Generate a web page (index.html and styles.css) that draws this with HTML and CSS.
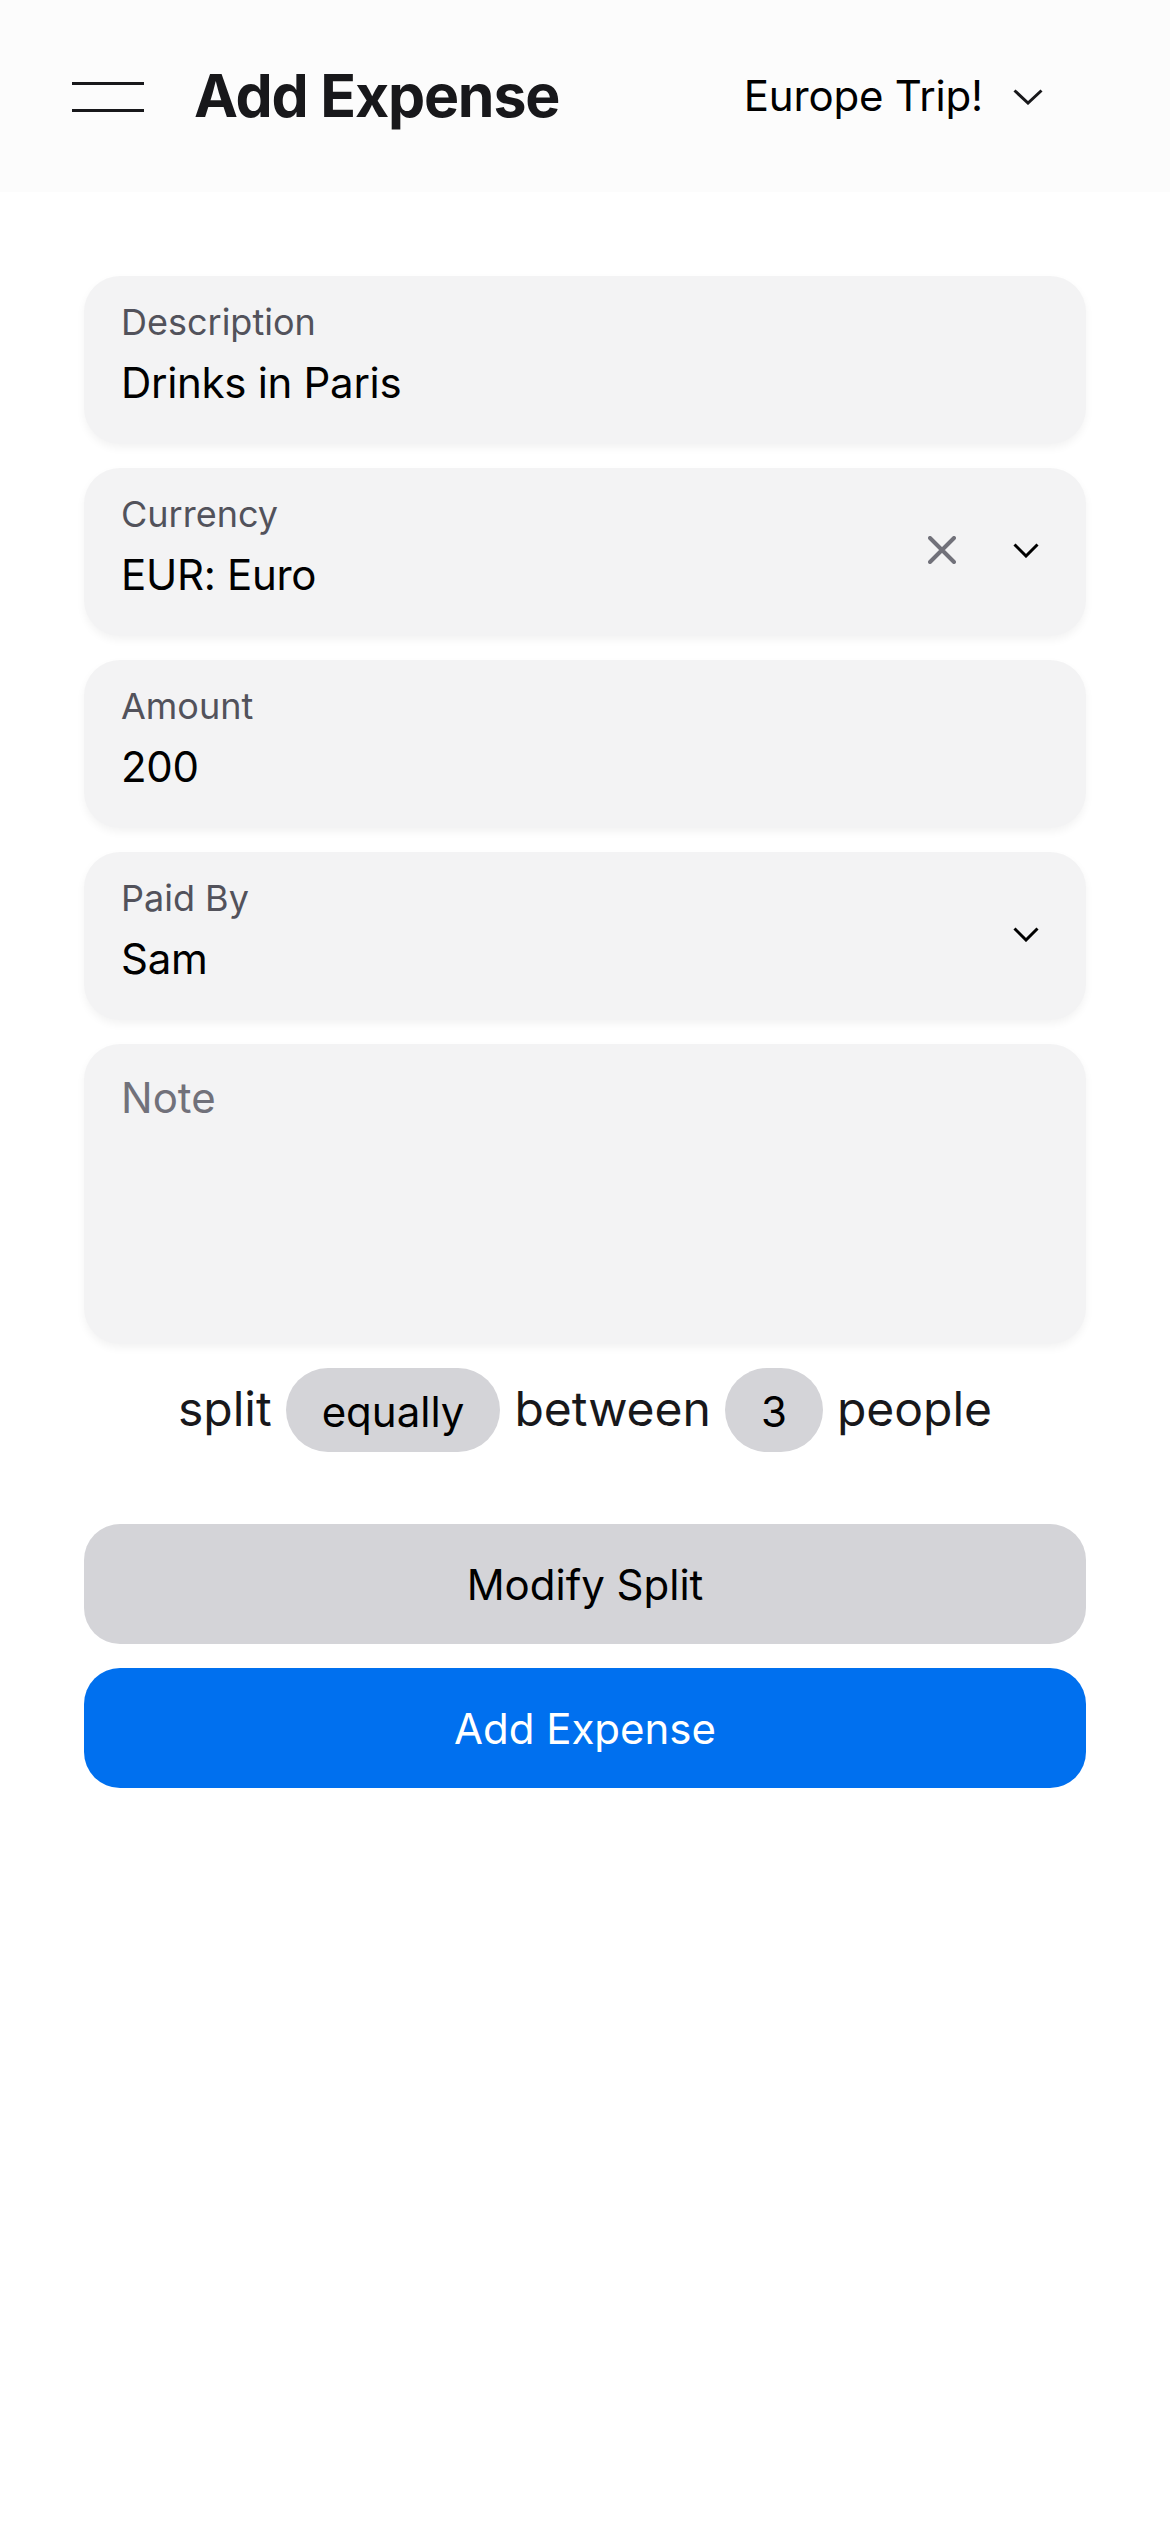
FILE: index.html
```html
<!DOCTYPE html>
<html lang="en">
<head>
<meta charset="utf-8">
<title>Add Expense</title>
<link rel="stylesheet" href="styles.css">
</head>
<body>
<header class="topbar">
  <svg class="menu-icon" width="72" height="30" viewBox="0 0 72 30" aria-hidden="true">
    <line x1="0" y1="1.5" x2="72" y2="1.5" stroke="#18181b" stroke-width="3"/>
    <line x1="0" y1="28.5" x2="72" y2="28.5" stroke="#18181b" stroke-width="3"/>
  </svg>
  <h1 class="title">Add Expense</h1>
  <div class="trip">
    <span class="trip-name">Europe Trip!</span>
    <svg class="chev chev-head" width="30" height="16" viewBox="0 0 30 16" aria-hidden="true">
      <path d="M1.5 1.5 L15 14 L28.5 1.5" fill="none" stroke="#18181b" stroke-width="3"/>
    </svg>
  </div>
</header>

<main class="form">
  <div class="field">
    <div class="field-body">
      <div class="label">Description</div>
      <div class="value">Drinks in Paris</div>
    </div>
  </div>

  <div class="field">
    <div class="field-body">
      <div class="label">Currency</div>
      <div class="value">EUR: Euro</div>
    </div>
    <div class="field-icons">
      <svg class="clear-icon" width="28" height="28" viewBox="0 0 28 28" aria-hidden="true">
        <path d="M2 2 L26 26 M26 2 L2 26" fill="none" stroke="#71717a" stroke-width="4" stroke-linecap="round"/>
      </svg>
      <svg class="chev" width="26" height="15" viewBox="0 0 26 15" aria-hidden="true">
        <path d="M1.5 1.5 L13 13 L24.5 1.5" fill="none" stroke="#000" stroke-width="3"/>
      </svg>
    </div>
  </div>

  <div class="field">
    <div class="field-body">
      <div class="label">Amount</div>
      <div class="value">200</div>
    </div>
  </div>

  <div class="field">
    <div class="field-body">
      <div class="label">Paid By</div>
      <div class="value">Sam</div>
    </div>
    <div class="field-icons">
      <svg class="chev" width="26" height="15" viewBox="0 0 26 15" aria-hidden="true">
        <path d="M1.5 1.5 L13 13 L24.5 1.5" fill="none" stroke="#000" stroke-width="3"/>
      </svg>
    </div>
  </div>

  <div class="field note">
    <div class="placeholder">Note</div>
  </div>

  <div class="split-row">
    <span class="split-word">split</span>
    <span class="pill">equally</span>
    <span class="split-word">between</span>
    <span class="pill">3</span>
    <span class="split-word">people</span>
  </div>

  <div class="buttons">
    <button class="btn btn-secondary">Modify Split</button>
    <button class="btn btn-primary">Add Expense</button>
  </div>
</main>
</body>
</html>
```

FILE: styles.css
```css
* {
  box-sizing: border-box;
}

html, body {
  margin: 0;
  padding: 0;
  background: #ffffff;
  font-family: "Inter", "Noto Sans", "Liberation Sans", sans-serif;
  color: #000;
}

.topbar {
  height: 192px;
  background: #fcfcfc;
  display: flex;
  align-items: center;
  padding: 0 127px 0 72px;
}

.menu-icon {
  display: block;
  flex: none;
  margin-top: 2px;
}

.title {
  margin: 0 0 0 50px;
  font-size: 59px;
  font-weight: 700;
  color: #18181b;
  line-height: 72px;
  letter-spacing: -1.2px;
}

.trip {
  margin-left: auto;
  display: flex;
  align-items: center;
  gap: 30px;
}

.trip-name {
  font-size: 42px;
  line-height: 52px;
  color: #000;
  letter-spacing: -0.2px;
}

.chev {
  display: block;
  flex: none;
}

.chev-head {
  margin-top: 2px;
}

.form {
  padding: 84px 84px 0;
  display: flex;
  flex-direction: column;
  gap: 24px;
}

.field {
  background: #f3f3f4;
  border-radius: 36px;
  height: 168px;
  display: flex;
  align-items: center;
  padding: 0 47px 0 37px;
  box-shadow: 0 4px 8px rgba(0, 0, 0, 0.05);
}

.field-body {
  flex: 1;
  padding: 24px 0 35px;
}

.label {
  font-size: 36px;
  line-height: 44px;
  color: #52525b;
}

.value {
  margin-top: 13px;
  font-size: 42px;
  line-height: 52px;
  color: #000;
  letter-spacing: -0.3px;
}

.field-icons {
  display: flex;
  align-items: center;
  gap: 57px;
  margin-top: -4px;
}

.note {
  height: 300px;
  align-items: flex-start;
  padding-top: 28px;
}

.placeholder {
  font-size: 42px;
  line-height: 52px;
  color: #71717a;
}

.split-row {
  display: flex;
  justify-content: center;
  align-items: center;
  gap: 14px;
  height: 84px;
}

.split-word {
  font-size: 48px;
  line-height: 58px;
  color: #18181b;
  margin-top: -3px;
}

.pill {
  height: 84px;
  display: flex;
  align-items: center;
  padding: 0 36px;
  border-radius: 42px;
  background: #d4d4d8;
  font-size: 42px;
  color: #000;
  padding-top: 2px;
}

.buttons {
  margin-top: 48px;
  display: flex;
  flex-direction: column;
  gap: 24px;
}

.btn {
  height: 120px;
  border: none;
  border-radius: 36px;
  font-family: "Inter", "Noto Sans", "Liberation Sans", sans-serif;
  font-size: 42px;
  width: 100%;
  display: flex;
  align-items: center;
  justify-content: center;
}

.btn-secondary {
  background: #d4d4d8;
  color: #000;
}

.btn-primary {
  background: #0070ef;
  color: #ffffff;
}
```
